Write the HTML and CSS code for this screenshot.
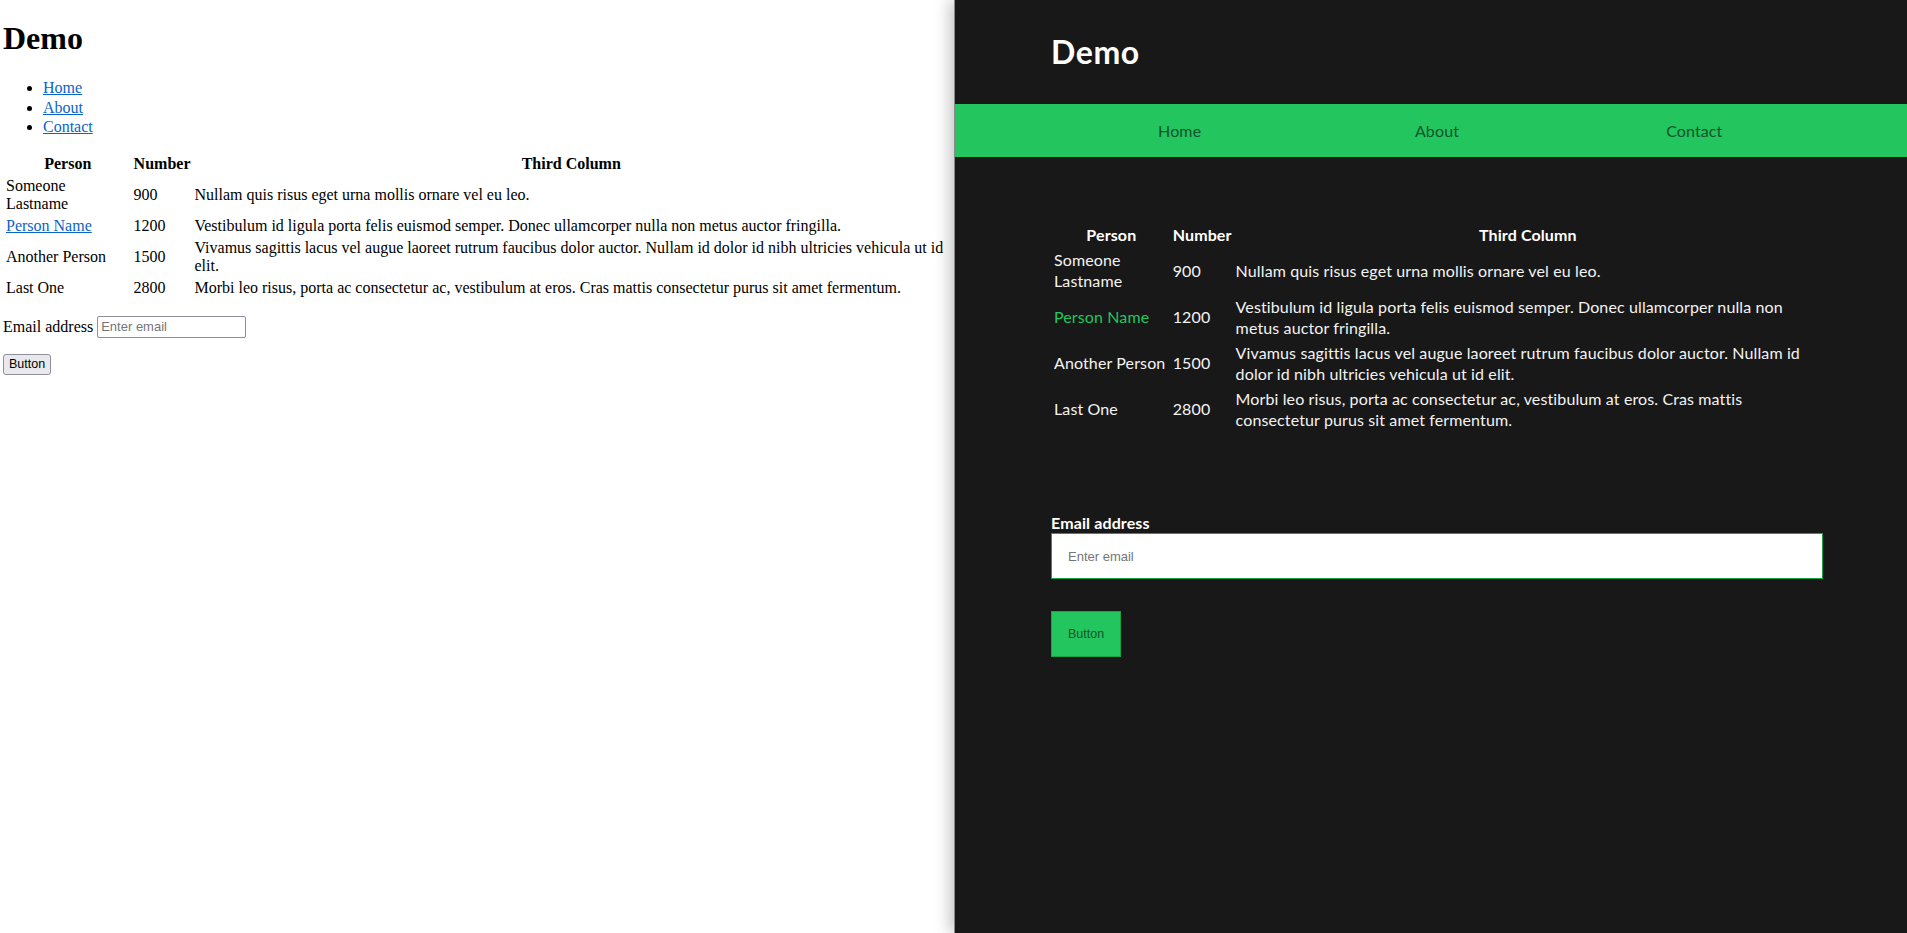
FILE: index.html
```html
<!DOCTYPE html>
<html lang="en">
<head>
<meta charset="utf-8">
<title>Demo</title>
<link rel="stylesheet" href="styles.css">
</head>
<body>
<div class="page">
  <section class="plain">
    <h1 class="plain-title">Demo</h1>
    <ul class="plain-nav">
      <li><a href="#">Home</a></li>
      <li><a href="#">About</a></li>
      <li><a href="#">Contact</a></li>
    </ul>
    <table class="plain-table">
      <thead>
        <tr><th>Person</th><th>Number</th><th>Third Column</th></tr>
      </thead>
      <tbody>
        <tr><td>Someone Lastname</td><td>900</td><td>Nullam quis risus eget urna mollis ornare vel eu leo.</td></tr>
        <tr><td><a href="#">Person Name</a></td><td>1200</td><td>Vestibulum id ligula porta felis euismod semper. Donec ullamcorper nulla non metus auctor fringilla.</td></tr>
        <tr><td>Another Person</td><td>1500</td><td>Vivamus sagittis lacus vel augue laoreet rutrum faucibus dolor auctor. Nullam id dolor id nibh ultricies vehicula ut id elit.</td></tr>
        <tr><td>Last One</td><td>2800</td><td>Morbi leo risus, porta ac consectetur ac, vestibulum at eros. Cras mattis consectetur purus sit amet fermentum.</td></tr>
      </tbody>
    </table>
    <form class="plain-form">
      <div class="plain-field"><label for="e1">Email address</label> <input id="e1" class="plain-input" type="email" placeholder="Enter email"></div>
      <button type="button" class="plain-button">Button</button>
    </form>
  </section>
  <section class="styled">
    <header class="styled-header"><h1 class="styled-title">Demo</h1></header>
    <nav class="styled-nav">
      <ul class="styled-menu">
        <li><a href="#">Home</a></li>
        <li><a href="#">About</a></li>
        <li><a href="#">Contact</a></li>
      </ul>
    </nav>
    <main class="styled-main">
      <table class="styled-table">
        <thead>
          <tr><th>Person</th><th>Number</th><th>Third Column</th></tr>
        </thead>
        <tbody>
          <tr><td>Someone Lastname</td><td>900</td><td>Nullam quis risus eget urna mollis ornare vel eu leo.</td></tr>
          <tr><td><a href="#">Person Name</a></td><td>1200</td><td>Vestibulum id ligula porta felis euismod semper. Donec ullamcorper nulla non metus auctor fringilla.</td></tr>
          <tr><td>Another Person</td><td>1500</td><td>Vivamus sagittis lacus vel augue laoreet rutrum faucibus dolor auctor. Nullam id dolor id nibh ultricies vehicula ut id elit.</td></tr>
          <tr><td>Last One</td><td>2800</td><td>Morbi leo risus, porta ac consectetur ac, vestibulum at eros. Cras mattis consectetur purus sit amet fermentum.</td></tr>
        </tbody>
      </table>
      <form class="styled-form">
        <label for="e2" class="styled-label">Email address</label>
        <input id="e2" class="styled-input" type="email" placeholder="Enter email">
        <button type="button" class="styled-button">Button</button>
      </form>
    </main>
  </section>
</div>
</body>
</html>
```
FILE: styles.css
```css
html, body {
  margin: 0;
  padding: 0;
}

.page {
  display: flex;
  height: 100vh;
  overflow: hidden;
}

/* ---------- Unstyled pane ---------- */
.plain {
  flex: none;
  width: 954px;
  box-sizing: border-box;
  padding: 0 3px;
  background: #fff;
  color: #000;
  font-family: "Liberation Serif", "Times New Roman", serif;
  font-size: 16px;
}

.plain a {
  color: #0a64c8;
}

.plain-title {
  font-size: 32px;
  font-weight: bold;
  margin: 20px 0 21px;
}

.plain-nav {
  margin: 0 0 15px;
  padding-left: 40px;
}

.plain-nav li {
  line-height: 19.5px;
}

.plain-table {
  border-spacing: 2px;
}

.plain-table th,
.plain-table td {
  padding: 1px;
}

.plain-field {
  margin: 16px 0 16px;
}

.plain-input {
  width: 149px;
  height: 22px;
  box-sizing: border-box;
  border: 1px solid #8f8f9d;
  border-radius: 2px;
  padding: 1px 3px;
  font: 13px "Liberation Sans", Arial, sans-serif;
  color: #000;
}

.plain-input::placeholder {
  color: #757575;
}

.plain-button {
  height: 21px;
  padding: 0 5px;
  border: 1px solid #8f8f9d;
  border-radius: 3px;
  background: #e9e9ed;
  color: #000;
  font: 12.5px "Liberation Sans", Arial, sans-serif;
}

/* ---------- Styled pane ---------- */
.styled {
  flex: 1;
  min-width: 0;
  position: relative;
  background: #181818;
  border-left: 1px solid #8a8a8a;
  box-shadow: -5px 0 14px rgba(0, 0, 0, 0.22);
  color: #f3f3f3;
  font-family: Lato, "Open Sans", sans-serif;
  font-size: 16px;
  line-height: 1.33;
  letter-spacing: 0.12px;
}

.styled-header {
  padding: 30px 84px 31px 96px;
}

.styled-title {
  margin: 0;
  font-size: 32px;
  line-height: 43px;
  font-weight: 700;
  letter-spacing: 0.6px;
  color: #fff;
}

.styled-nav {
  background: #22c55e;
  padding: 16px 84px 16px 96px;
}

.styled-menu {
  display: grid;
  grid-template-columns: repeat(3, 1fr);
  list-style: none;
  margin: 0;
  padding: 0;
  text-align: center;
}

.styled-menu a {
  color: #14532d;
  text-decoration: none;
}

.styled-main {
  padding: 0 84px 0 96px;
}

.styled-table {
  margin: 64px 0 0;
  border-spacing: 2px;
  line-height: 21.1px;
}

.styled-table th,
.styled-table td {
  padding: 1px;
}

.styled-table th {
  color: #fff;
  font-weight: 700;
}

.styled-table a {
  color: #22c55e;
  text-decoration: none;
}

.styled-form {
  margin-top: 79px;
}

.styled-label {
  display: block;
  font-weight: 700;
  color: #fff;
}

.styled-input {
  display: block;
  width: 100%;
  height: 46px;
  box-sizing: border-box;
  padding: 0 16px;
  border: 1px solid #16a34a;
  border-radius: 0;
  background: #fff;
  color: #000;
  font: 13px "Liberation Sans", Arial, sans-serif;
  outline: none;
}

.styled-input::placeholder {
  color: #757575;
}

.styled-button {
  display: block;
  margin-top: 32px;
  height: 46px;
  padding: 0 16px;
  border: 1px solid #16a34a;
  border-radius: 0;
  background: #22c55e;
  color: #14532d;
  font: 12.5px "Liberation Sans", Arial, sans-serif;
}
```
